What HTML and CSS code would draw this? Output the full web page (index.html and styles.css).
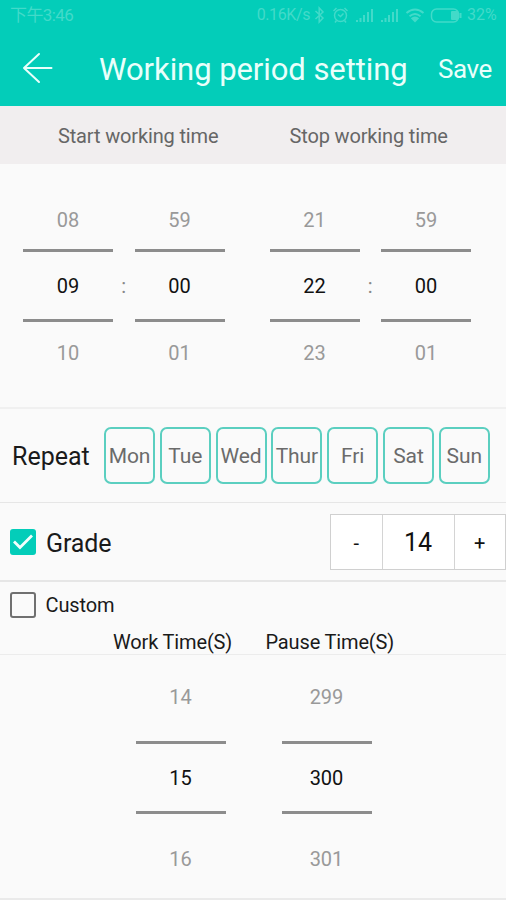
FILE: index.html
```html
<!DOCTYPE html>
<html lang="en">
<head>
<meta charset="utf-8">
<title>Working period setting</title>
<link rel="stylesheet" href="styles.css">
</head>
<body>
<header class="app-header">
  <div class="status-bar">
    <span class="clock">下午3:46</span>
    <span class="rate">0.16K/s</span>
    <svg class="status-icons" width="155" height="20" viewBox="0 0 155 20" fill="none" stroke="currentColor" stroke-width="1.5">
      <path d="M3.500 6l7.500 7-3.800 4V3L11 7l-7.500 7"/>
      <circle cx="28.500" cy="10.500" r="6"/>
      <path d="M26 9.500l2.500 2 3-3M21.500 6l3-3M35.500 6l-3-3M24.500 15.500l-1.500 2M32.500 15.500l1.500 2"/>
      <path stroke-width="2" d="M45 17v-2M48.500 17v-4M52 17v-7M56 17V7M60 17V4M70 17v-2M73.500 17v-4M77 17v-7M81 17V7M85 17V4"/>
      <path stroke-width="2" d="M94.500 8q8.500-7 17 0M97.500 11.200q5.500-4.500 11 0"/>
      <path fill="currentColor" stroke="none" d="M98.800 13.200q4.200-3.500 8.400 0L103 17.500z"/>
      <rect x="119.500" y="4" width="27" height="13" rx="5"/>
      <rect x="139" y="6" width="7" height="9" rx="1" fill="currentColor" stroke="none"/>
      <path stroke-width="2" d="M148.500 8v5"/>
    </svg>
    <span class="battery">32%</span>
  </div>
  <div class="title-bar">
    <svg class="back" width="32" height="32" viewBox="0 0 32 32" fill="none" stroke="currentColor" stroke-width="2" stroke-linecap="round" stroke-linejoin="round"><path d="M29.500 16H2M17 2L2 16 17 30"/></svg>
    <h1 class="title">Working period setting</h1>
    <span class="save">Save</span>
  </div>
</header>

<div class="column-heads"><span class="start-head">Start working time</span><span class="stop-head">Stop working time</span></div>

<section class="clock-pickers">
  <div class="picker"><span class="prev">08</span><span class="current">09</span><span class="next">10</span></div>
  <span class="colon">:</span>
  <div class="picker"><span class="prev">59</span><span class="current">00</span><span class="next">01</span></div>
  <span></span>
  <div class="picker"><span class="prev">21</span><span class="current">22</span><span class="next">23</span></div>
  <span class="colon">:</span>
  <div class="picker"><span class="prev">59</span><span class="current">00</span><span class="next">01</span></div>
</section>

<section class="repeat">
  <span class="repeat-label">Repeat</span>
  <div class="days">
    <span class="day">Mon</span><span class="day">Tue</span><span class="day">Wed</span><span class="day">Thur</span><span class="day">Fri</span><span class="day">Sat</span><span class="day">Sun</span>
  </div>
</section>

<section class="grade">
  <span class="box checked"><svg width="26" height="26" viewBox="0 0 26 26" fill="none" stroke="currentColor" stroke-width="2.800"><path d="M4 12.500l6 6L22 6.500"/></svg></span>
  <span class="grade-label">Grade</span>
  <div class="stepper"><span class="step">-</span><span class="value">14</span><span class="step">+</span></div>
</section>

<section class="custom">
  <div class="custom-row"><span class="box"></span><span class="custom-label">Custom</span></div>
  <div class="custom-heads"><span class="work-head">Work Time(S)</span><span class="pause-head">Pause Time(S)</span></div>
</section>

<section class="duration-pickers">
  <div class="picker tall"><span class="prev">14</span><span class="current">15</span><span class="next">16</span></div>
  <div class="picker tall"><span class="prev">299</span><span class="current">300</span><span class="next">301</span></div>
</section>
</body>
</html>
```

FILE: styles.css
```css
* { box-sizing: border-box; }

body {
  margin: 0;
  width: 506px;
  height: 900px;
  overflow: hidden;
  background: #fafafa;
  color: #1a1a1a;
  font-family: Roboto, "Noto Sans CJK SC", sans-serif;
  font-size: 20px;
  line-height: 24px;
  white-space: nowrap;
}

.app-header { height: 106px; background: #03cdb9; color: #e9fffb; }

.status-bar {
  display: flex;
  align-items: center;
  height: 30px;
  padding: 0 8px 0 10px;
  color: #42dac9;
  font-size: 16px;
}
.clock { font-size: 17px; letter-spacing: -0.6px; }
.rate { margin-left: auto; letter-spacing: -0.4px; }
.status-icons { margin: 0 0 0 2px; flex: none; }
.battery { width: 31px; }

.title-bar { display: flex; align-items: center; height: 76px; padding-left: 22px; }
.back { flex: none; }
.title { margin: 3px 0 0 45px; width: 308px; font-size: 31px; line-height: 36px; font-weight: 400; letter-spacing: -0.07px; }
.save { margin: 2px 0 0 31px; font-size: 26px; line-height: 30px; letter-spacing: -0.4px; }

.column-heads {
  display: flex;
  align-items: center;
  height: 58px;
  padding: 2px 0 0 58px;
  background: #f1eeef;
  color: #666;
  letter-spacing: -0.15px;
}
.start-head { width: 231.500px; }

.clock-pickers {
  display: grid;
  grid-template-columns: 90px 21.500px 90px 45px 90px 21.500px 90px;
  height: 245px;
  padding-left: 23px;
  border-bottom: 2px solid #f0f0f0;
}
.picker { display: grid; grid-template-rows: 85px 73px 1fr; text-align: center; }
.prev, .next { color: #999; }
.prev { align-self: end; padding-bottom: 17px; }
.current { border: solid #8c8c8c; border-width: 3px 0; line-height: 68px; color: #111; }
.next { padding-top: 19px; }
.colon { margin-top: 110px; text-align: center; color: #888; }

.repeat { display: flex; align-items: center; height: 94px; padding-left: 12px; border-bottom: 1px solid #e6e6e6; }
.repeat-label { width: 92px; margin-top: 2px; font-size: 25px; line-height: 30px; }
.days { display: flex; gap: 4.800px; }
.day {
  width: 51px;
  height: 57px;
  border: 2px solid #5bcfc0;
  border-radius: 7px;
  text-align: center;
  line-height: 55px;
  font-size: 21px;
  letter-spacing: -0.1px;
  color: #6b6b6b;
}

.grade { display: flex; align-items: center; height: 79px; padding-left: 10px; border-bottom: 2px solid #e6e6e6; }
.box { width: 26px; height: 26px; border: 2.500px solid #707070; border-radius: 3px; flex: none; }
.box.checked { border: 0; background: #03cdb9; color: #f2fffd; }
.box svg { display: block; }
.grade-label { margin: 4px 0 0 10px; font-size: 25px; line-height: 30px; letter-spacing: -0.1px; }
.stepper { display: flex; margin-left: auto; width: 176px; height: 56px; border: 1px solid #d0d0d0; background: #fff; color: #111; line-height: 56px; text-align: center; }
.step { flex: 1; }
.value { width: 73px; border: solid #d4d4d4; border-width: 0 1px; font-size: 25px; }

.custom { height: 73px; border-bottom: 1px solid #ececec; }
.custom-row { display: flex; align-items: center; height: 45px; padding-left: 10px; }
.custom-label { margin: 1px 0 0 9.500px; letter-spacing: -0.1px; }
.custom-heads { display: flex; padding: 3px 0 0 113px; letter-spacing: -0.15px; }
.work-head { width: 152.500px; }

.duration-pickers { display: grid; grid-template-columns: 90px 90px; gap: 56px; height: 245px; padding-left: 135.500px; border-bottom: 2px solid #eaeaea; }
.picker.tall { grid-template-rows: 86px 73px 1fr; }
.tall .prev { padding-bottom: 32px; }
.tall .next { padding-top: 33px; }
```
